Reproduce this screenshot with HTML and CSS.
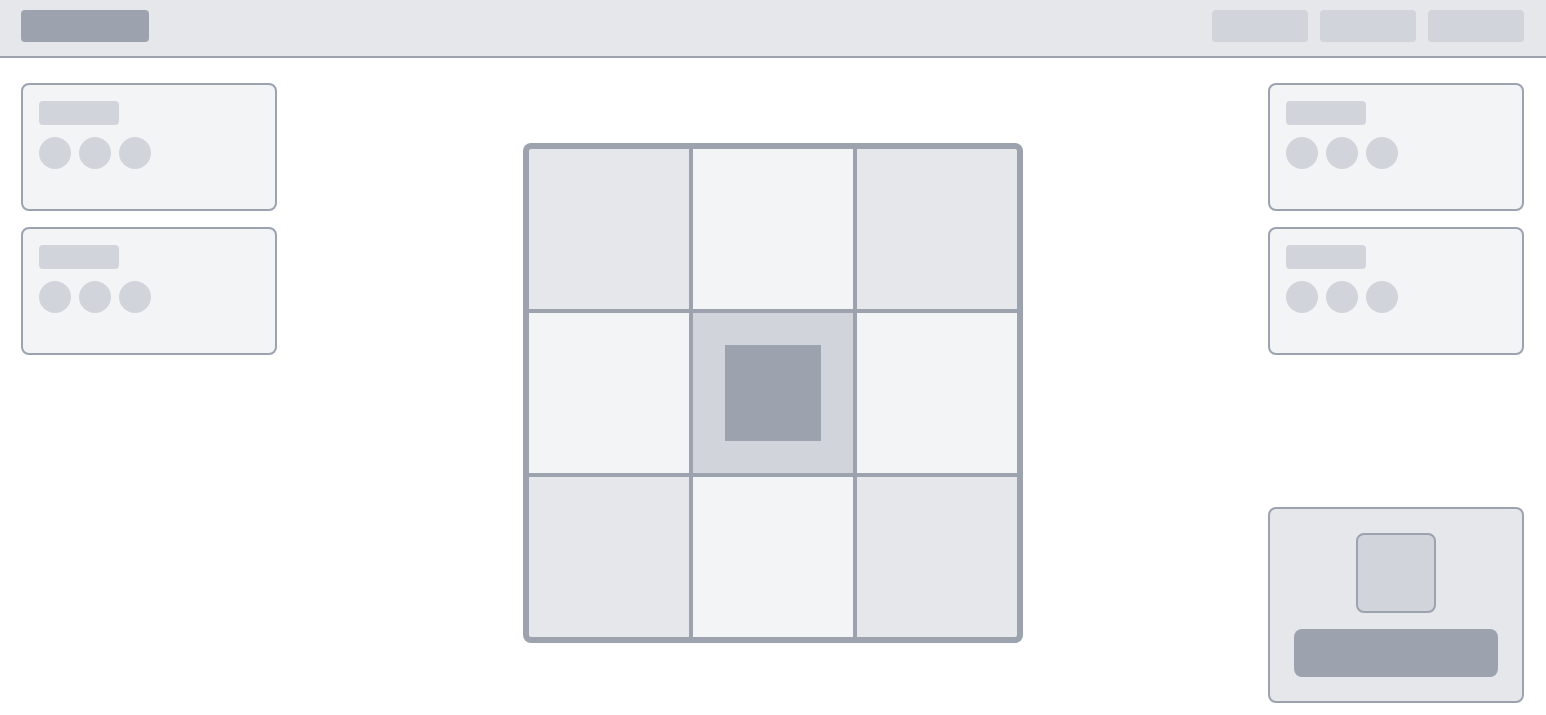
FILE: index.html
```html
<!DOCTYPE html>
<html lang="en">
<head>
<meta charset="utf-8">
<title>Layout</title>
<link rel="stylesheet" href="styles.css">
</head>
<body>
<header class="topbar">
  <div class="logo"></div>
  <nav class="nav">
    <div class="nav-item"></div>
    <div class="nav-item"></div>
    <div class="nav-item"></div>
  </nav>
</header>
<main class="main">
  <aside class="side">
    <div class="card">
      <div class="card-label"></div>
      <div class="dots"><span class="dot"></span><span class="dot"></span><span class="dot"></span></div>
    </div>
    <div class="card">
      <div class="card-label"></div>
      <div class="dots"><span class="dot"></span><span class="dot"></span><span class="dot"></span></div>
    </div>
  </aside>
  <section class="center">
    <div class="board">
      <div class="cell dark c-tl"></div>
      <div class="cell light"></div>
      <div class="cell dark c-tr"></div>
      <div class="cell light"></div>
      <div class="cell mid"><div class="piece"></div></div>
      <div class="cell light"></div>
      <div class="cell dark c-bl"></div>
      <div class="cell light"></div>
      <div class="cell dark c-br"></div>
    </div>
  </section>
  <aside class="side side-right">
    <div class="stack">
      <div class="card">
        <div class="card-label"></div>
        <div class="dots"><span class="dot"></span><span class="dot"></span><span class="dot"></span></div>
      </div>
      <div class="card">
        <div class="card-label"></div>
        <div class="dots"><span class="dot"></span><span class="dot"></span><span class="dot"></span></div>
      </div>
    </div>
    <div class="action-card">
      <div class="preview"></div>
      <div class="action-btn"></div>
    </div>
  </aside>
</main>
</body>
</html>
```

FILE: styles.css
```css
* { box-sizing: border-box; }
html, body { margin: 0; padding: 0; }
body {
  background: #ffffff;
  font-family: "Inter", "Liberation Sans", sans-serif;
}
.topbar {
  height: 58px;
  background: #e5e7eb;
  border-bottom: 2px solid #9ca3af;
  padding: 10px 22px 0 21px;
  display: flex;
  justify-content: space-between;
  align-items: flex-start;
}
.logo {
  width: 128px;
  height: 32px;
  background: #9ca3af;
  border-radius: 4px;
}
.nav { display: flex; gap: 12px; }
.nav-item {
  width: 96px;
  height: 32px;
  background: #d1d5db;
  border-radius: 4px;
}
.main {
  display: flex;
  height: 669px;
  padding: 25px 22px 24px 21px;
}
.side {
  width: 256px;
  flex: none;
  display: flex;
  flex-direction: column;
  gap: 16px;
}
.side-right {
  justify-content: space-between;
}
.stack { display: flex; flex-direction: column; gap: 16px; }
.card {
  height: 128px;
  background: #f3f4f6;
  border: 2px solid #9ca3af;
  border-radius: 8px;
  padding: 16px;
  display: flex;
  flex-direction: column;
  gap: 12px;
}
.card-label {
  width: 80px;
  height: 24px;
  background: #d1d5db;
  border-radius: 4px;
}
.dots { display: flex; gap: 8px; }
.dot {
  width: 32px;
  height: 32px;
  border-radius: 50%;
  background: #d1d5db;
}
.center {
  flex: 1;
  display: flex;
  align-items: center;
  justify-content: center;
}
.board {
  width: 500px;
  height: 500px;
  background: #9ca3af;
  border-radius: 8px;
  padding: 6px;
  display: grid;
  grid-template-columns: repeat(3, 1fr);
  grid-template-rows: repeat(3, 1fr);
  gap: 4px;
}
.cell { display: flex; align-items: center; justify-content: center; }
.dark { background: #e5e7eb; }
.light { background: #f3f4f6; }
.mid { background: #d1d5db; }
.c-tl { border-top-left-radius: 2px; }
.c-tr { border-top-right-radius: 2px; }
.c-bl { border-bottom-left-radius: 2px; }
.c-br { border-bottom-right-radius: 2px; }
.piece {
  width: 96px;
  height: 96px;
  background: #9ca3af;
}
.action-card {
  height: 196px;
  background: #e5e7eb;
  border: 2px solid #9ca3af;
  border-radius: 8px;
  padding: 24px;
  display: flex;
  flex-direction: column;
  align-items: center;
  gap: 16px;
}
.preview {
  width: 80px;
  height: 80px;
  background: #d1d5db;
  border: 2px solid #9ca3af;
  border-radius: 8px;
  flex: none;
}
.action-btn {
  align-self: stretch;
  height: 48px;
  background: #9ca3af;
  border-radius: 8px;
}
```
